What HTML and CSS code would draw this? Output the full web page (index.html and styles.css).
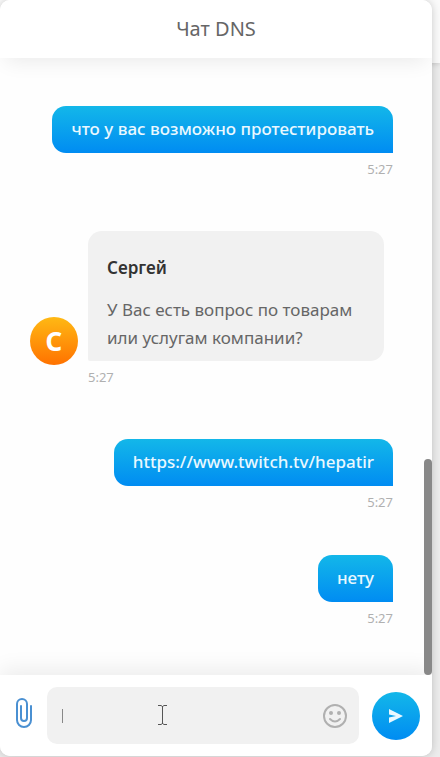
FILE: index.html
```html
<!DOCTYPE html>
<html lang="ru">
<head>
<meta charset="utf-8">
<meta name="viewport" content="width=device-width, initial-scale=1">
<title>Чат DNS</title>
<link rel="stylesheet" href="styles.css">
</head>
<body>
<div class="page-header"></div>
<main class="chat">
  <header class="chat-header"><h1>Чат DNS</h1></header>
  <section class="messages" aria-label="Сообщения">
    <article class="message own">
      <p class="bubble">что у вас возможно протестировать</p>
      <time>5:27</time>
    </article>
    <article class="message agent">
      <span class="avatar">С</span>
      <div class="bubble">
        <h2>Сергей</h2>
        <p>У Вас есть вопрос по товарам или услугам компании?</p>
      </div>
      <time>5:27</time>
    </article>
    <article class="message own">
      <a class="bubble" href="https://www.twitch.tv/hepatir">https://www.twitch.tv/hepatir</a>
      <time>5:27</time>
    </article>
    <article class="message own follow">
      <p class="bubble">нету</p>
      <time>5:27</time>
    </article>
    <div class="scroll-thumb"></div>
  </section>
  <form class="composer">
    <button class="attach" type="button" aria-label="Прикрепить файл">
      <svg width="16" height="30" viewBox="0 0 16 30" fill="none" stroke="#4a90d2" stroke-width="2" stroke-linecap="round"><path d="M15 8v14a7 7 0 0 1-14 0V6a5 5 0 0 1 10 0v14a3 3 0 0 1-6 0V8"/></svg>
    </button>
    <div class="field">
      <input type="text" aria-label="Сообщение">
      <span class="caret"></span>
      <svg class="pointer" width="9" height="20" viewBox="0 0 9 20" fill="none" stroke="#555" stroke-width="1"><path d="M0 .5h3l1.500 1 1.500-1h3M4.500 1v18M0 19.500h3l1.500-1 1.500 1h3"/></svg>
      <button class="emoji" type="button" aria-label="Смайлы">
        <svg width="26" height="26" viewBox="0 0 26 26" fill="none" stroke="#b0b0b0" stroke-width="2" stroke-linecap="round"><circle cx="13" cy="13" r="11"/><path d="M8 16q5 5 10 0"/><g fill="#b0b0b0" stroke="none"><circle cx="9" cy="10" r="2"/><circle cx="17" cy="10" r="2"/></g></svg>
      </button>
    </div>
    <button class="send" type="submit" aria-label="Отправить">
      <svg width="16" height="14" viewBox="0 0 16 14" fill="#e9f8ff"><path d="M1 0 15 7 1 14V8.500L8 7 1 5.500z"/></svg>
    </button>
  </form>
</main>
</body>
</html>
```
FILE: styles.css
```css
* { box-sizing: border-box; }
body {
  margin: 0;
  height: 100vh;
  padding: 0 8px 1px 0;
  background: #ececec;
  font-family: "Noto Sans", "Open Sans", sans-serif;
  font-size: 17px;
  line-height: 28px;
  color: #666;
}
h1, h2, p { margin: 0; }
button { padding: 0; border: 0; background: none; display: flex; align-items: center; justify-content: center; }
.page-header {
  position: absolute;
  inset: 0 0 auto;
  height: 63px;
  background: #fafafa;
  box-shadow: 0 1px 5px rgba(0, 0, 0, .15);
}
.chat {
  position: relative;
  height: 100%;
  display: flex;
  flex-direction: column;
  overflow: hidden;
  border-radius: 10px;
  background: #fefefe;
  box-shadow: 0 0 8px rgba(0, 0, 0, .2);
}
.chat-header {
  height: 58px;
  display: flex;
  align-items: center;
  justify-content: center;
  background: #fff;
  box-shadow: 0 10px 20px -6px rgba(0, 0, 0, .08);
  z-index: 1;
}
h1 { font-size: 20px; font-weight: 400; }
.messages {
  flex: 1;
  min-height: 0;
  position: relative;
  display: flex;
  flex-direction: column;
  gap: 54px;
  padding: 48px 39px 0 30px;
}
.message { display: grid; row-gap: 8px; }
.own { justify-items: end; }
.follow { margin-top: -9px; }
.bubble { border-radius: 14px; }
.own .bubble {
  padding: 9px 19px 10px;
  border-bottom-right-radius: 0;
  background: linear-gradient(#13b7e9, #008cf2);
  color: #e9f8ff;
  font-weight: 500;
  text-decoration: none;
}
.agent {
  grid-template-columns: 48px 1fr;
  column-gap: 10px;
  padding-right: 9px;
}
.agent .bubble {
  padding: 23px 19px 9px;
  border-bottom-left-radius: 2px;
  background: #f1f1f1;
}
h2 { margin-bottom: 14px; font-size: 17px; font-weight: 600; color: #333; }
.avatar {
  align-self: end;
  height: 48px;
  margin-bottom: -4px;
  border-radius: 50%;
  background: linear-gradient(#ffb914, #ff7200);
  color: #fff;
  font-size: 26px;
  font-weight: 700;
  line-height: 48px;
  text-align: center;
}
time { font-size: 13px; line-height: 16px; color: #b0b0b0; }
.agent time { grid-column: 2; }
.scroll-thumb {
  position: absolute;
  right: 0;
  bottom: 0;
  width: 8px;
  height: 35%;
  border-radius: 4px;
  background: #888;
}
.composer {
  display: flex;
  align-items: center;
  gap: 13px;
  padding: 12px 12px 12px 14px;
  background: #fff;
  box-shadow: 0 -6px 20px rgba(0, 0, 0, .07);
}
.attach { width: 20px; height: 36px; margin-bottom: 6px; }
.field { position: relative; flex: 1; min-width: 0; display: flex; }
.field input {
  width: 100%;
  height: 57px;
  padding: 0 48px 0 15px;
  border: 0;
  border-radius: 10px;
  background: #f1f1f1;
  font: inherit;
}
.caret { position: absolute; left: 15px; top: 22px; width: 1px; height: 14px; background: #888; }
.pointer { position: absolute; left: 111px; top: 18px; }
.emoji { position: absolute; right: 11px; top: 16px; }
.send {
  width: 48px;
  height: 48px;
  border-radius: 50%;
  background: linear-gradient(#13b7e9, #008cf2);
}
```
